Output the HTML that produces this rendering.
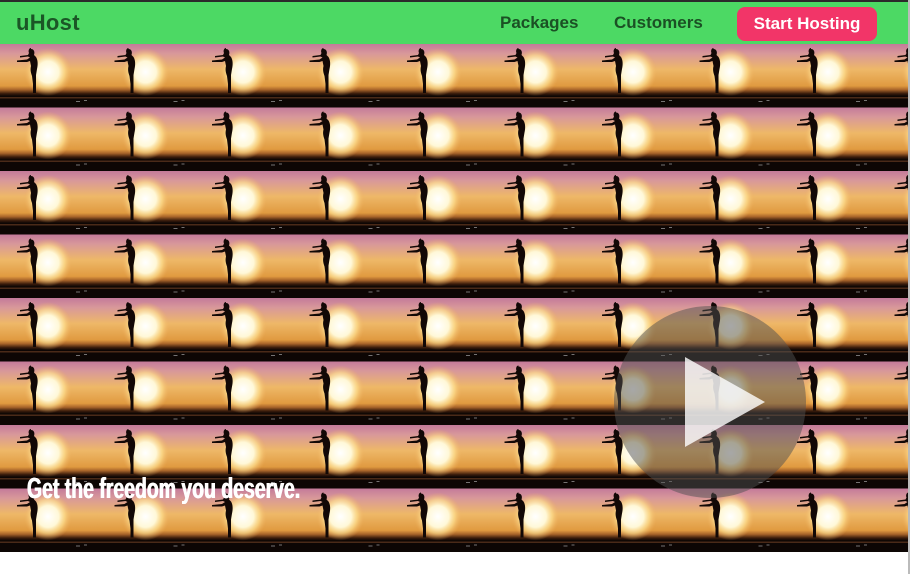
<!DOCTYPE html>
<html><head><meta charset="utf-8"><style>
*{margin:0;padding:0;box-sizing:border-box}
body{width:924px;height:574px;overflow:hidden;background:#fff;font-family:"Liberation Sans",sans-serif;position:relative}
.top{position:absolute;left:0;top:0;width:924px;height:2px;background:#2b2b2b}
.nav{position:absolute;left:0;top:2px;width:908px;height:42px;background:#4cd964}
.logo{position:absolute;left:16px;top:8px;font-size:22px;font-weight:bold;color:#1b5626;letter-spacing:0.3px}
.link{position:absolute;top:11px;font-size:17px;font-weight:bold;color:#1b5024}
.btn{position:absolute;left:737px;top:5px;width:140px;height:34px;background:#f23568;border-radius:8px;color:#fff;font-weight:bold;font-size:17px;text-align:center;line-height:34px}
.hero{position:absolute;left:0;top:44px;width:908px;height:508px}
.tag{position:absolute;left:27px;top:473px;color:#fff;font-weight:bold;font-size:29px;transform:scaleX(0.67);transform-origin:left top;white-space:nowrap;text-shadow:0.6px 0 #fff,-0.6px 0 #fff}
.side{position:absolute;left:908px;top:0;width:16px;height:574px;background:#fff;border-left:2px solid #bbb}
</style></head><body>
<div class="top"></div>
<svg class="hero" width="908" height="508" viewBox="0 0 908 508">
<defs>
<linearGradient id="sky" x1="0" y1="0" x2="0" y2="1">
<stop offset="0" stop-color="#c47a9a"/>
<stop offset="0.15" stop-color="#d8989a"/>
<stop offset="0.4" stop-color="#eeb868"/>
<stop offset="0.66" stop-color="#e09a40"/>
<stop offset="0.72" stop-color="#a8642a"/>
<stop offset="0.78" stop-color="#3a1c0c"/>
<stop offset="0.82" stop-color="#0d0604"/>
<stop offset="1" stop-color="#0d0604"/>
</linearGradient>
<radialGradient id="sun" cx="0.5" cy="0.5" r="0.5">
<stop offset="0" stop-color="#ffffff"/>
<stop offset="0.45" stop-color="#fff8d8"/>
<stop offset="0.7" stop-color="#ffe090" stop-opacity="0.7"/>
<stop offset="1" stop-color="#f0b060" stop-opacity="0"/>
</radialGradient>
<pattern id="p" width="97.5" height="63.5" patternUnits="userSpaceOnUse">
<rect width="97.5" height="63.5" fill="url(#sky)"/>
<circle cx="48" cy="28" r="24" fill="url(#sun)"/>
<rect x="0" y="53" width="97.5" height="1.5" fill="#4a2a18"/>
<path d="M31 5c3 0 4 3 3 6l2 2c2 3 2 8 1 12l-1 6 0 9 0 9-3 0 0-9-1-8c-1-3-2-6-1-10l-1-5-3 1-10 0 0-1.5 10-1 3-2-2-1-8 1 0-1.5 8-1 1-2c-1-2 0-5 2-5z" fill="#120806"/>
<rect x="76" y="57" width="4" height="1" fill="#bbb" opacity=".6"/><rect x="84" y="56" width="3" height="1" fill="#bbb" opacity=".6"/>
</pattern>
</defs>
<rect width="908" height="508" fill="url(#p)"/>
<circle cx="710" cy="358" r="96" fill="#505050" fill-opacity="0.5"/>
<path d="M685 313 L765 358 L685 403 Z" fill="#fff" fill-opacity="0.8"/>
</svg>
<div class="tag">Get the freedom you deserve.</div>
<div class="nav">
<div class="logo">uHost</div>
<div class="link" style="left:500px">Packages</div>
<div class="link" style="left:614px">Customers</div>
<div class="btn">Start Hosting</div>
</div>
<div class="side"></div>
</body></html>
